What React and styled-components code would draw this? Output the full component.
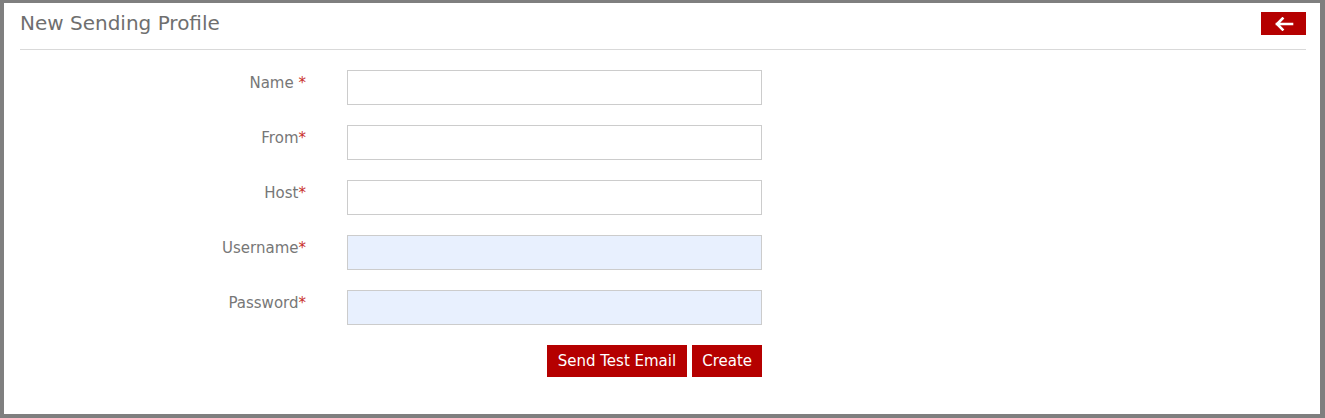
import React from "react";
import styled, { createGlobalStyle } from "styled-components";

const Global = createGlobalStyle`
  html, body { margin: 0; padding: 0; background: #fff; }
  body { font-family: "DejaVu Sans", Verdana, sans-serif; }
  * { box-sizing: border-box; }
`;

const Frame = styled.div`
  width: 1325px;
  height: 418px;
  border-style: solid;
  border-color: #7f7f7f;
  border-width: 3px 5px 4px 4px;
  padding: 0 14px 0 16px;
  background: #fff;
`;

const Header = styled.div`
  display: flex;
  align-items: center;
  justify-content: space-between;
  padding: 9px 0 14px;
  border-bottom: 1px solid #d9d9d9;
`;

const Title = styled.h1`
  margin: 0;
  font-size: 20px;
  font-weight: normal;
  color: #6f6f6f;
  line-height: 22px;
  transform: translateY(-1px);
`;

const BackButton = styled.button`
  width: 45px;
  height: 23px;
  border: none;
  background: #b50000;
  display: flex;
  align-items: center;
  justify-content: center;
  padding: 0;
  cursor: pointer;
`;

const Form = styled.div`
  display: grid;
  grid-template-columns: 286px 415px;
  column-gap: 41px;
  row-gap: 20px;
  padding-top: 20px;
`;

const Label = styled.label`
  text-align: right;
  font-size: 15px;
  color: #777;
  padding-top: 4px;
  line-height: 18px;
`;

const Star = styled.span`
  color: #c9302c;
`;

const Input = styled.input`
  width: 415px;
  height: 35px;
  border: 1px solid #cccccc;
  background: ${(p) => (p.$filled ? "#e8f0fe" : "#fff")};
  font-size: 14px;
  padding: 0 8px;
  outline: none;
`;

const Actions = styled.div`
  grid-column: 2;
  display: flex;
  justify-content: flex-end;
  gap: 5px;
`;

const Button = styled.button`
  height: 32px;
  border: none;
  background: #b50000;
  color: #fff;
  font-family: "DejaVu Sans", Verdana, sans-serif;
  font-size: 15px;
  padding: 0 ${(p) => p.$pad || 10}px;
  cursor: pointer;
`;

const fields = [
  { label: "Name", space: true },
  { label: "From" },
  { label: "Host" },
  { label: "Username", filled: true },
  { label: "Password", filled: true, type: "password" },
];

export default function App() {
  return (
    <>
      <Global />
      <Frame>
        <Header>
          <Title>New Sending Profile</Title>
          <BackButton aria-label="Back">
            <svg width="20" height="14" viewBox="0 0 20 14" fill="none">
              <path d="M18 7H3M8.5 1.5L3 7l5.5 5.5" stroke="#fff" strokeWidth="2.6" strokeLinecap="square" />
            </svg>
          </BackButton>
        </Header>
        <Form>
          {fields.map((f) => (
            <React.Fragment key={f.label}>
              <Label>
                {f.label}
                {f.space ? " " : ""}
                <Star>*</Star>
              </Label>
              <Input $filled={f.filled} type={f.type || "text"} />
            </React.Fragment>
          ))}
          <Actions>
            <Button $pad={11}>Send Test Email</Button>
            <Button $pad={10}>Create</Button>
          </Actions>
        </Form>
      </Frame>
    </>
  );
}
